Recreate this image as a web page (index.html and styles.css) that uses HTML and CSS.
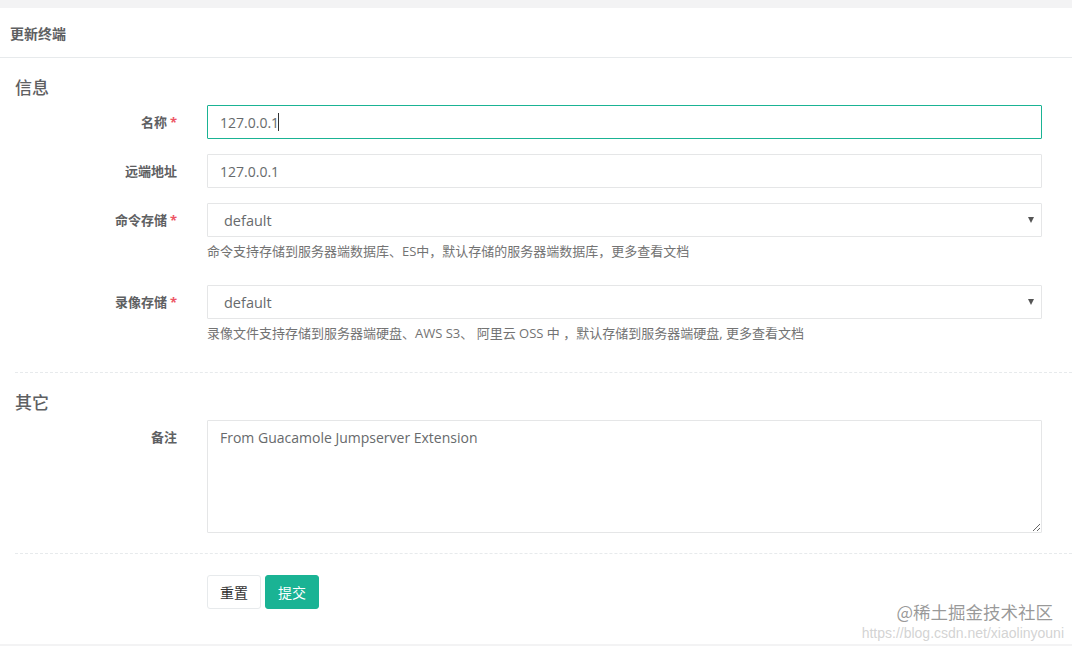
FILE: index.html
```html
<!DOCTYPE html>
<html lang="zh-CN">
<head>
<meta charset="utf-8">
<title>更新终端</title>
<link rel="stylesheet" href="styles.css">
</head>
<body>
<div class="page">
  <div class="panel">
    <div class="panel-head"><h5 class="panel-title">更新终端</h5></div>
    <form class="panel-body">
      <h3 class="section-title">信息</h3>

      <div class="form-row">
        <label class="form-label">名称 <span class="req">*</span></label>
        <div class="form-field">
          <div class="input-wrap">
            <input class="form-input is-focus" type="text" value="127.0.0.1">
            <span class="caret"></span>
          </div>
        </div>
      </div>

      <div class="form-row">
        <label class="form-label">远端地址</label>
        <div class="form-field">
          <input class="form-input" type="text" value="127.0.0.1">
        </div>
      </div>

      <div class="form-row">
        <label class="form-label">命令存储 <span class="req">*</span></label>
        <div class="form-field">
          <div class="select-wrap">
            <select class="form-select"><option>default</option></select>
          </div>
          <div class="help">命令支持存储到服务器端数据库、ES中，默认存储的服务器端数据库，更多查看文档</div>
        </div>
      </div>

      <div class="form-row">
        <label class="form-label">录像存储 <span class="req">*</span></label>
        <div class="form-field">
          <div class="select-wrap">
            <select class="form-select"><option>default</option></select>
          </div>
          <div class="help">录像文件支持存储到服务器端硬盘、AWS S3、 阿里云 OSS 中 ，默认存储到服务器端硬盘, 更多查看文档</div>
        </div>
      </div>

      <div class="hr-dashed"></div>

      <h3 class="section-title">其它</h3>

      <div class="form-row">
        <label class="form-label">备注</label>
        <div class="form-field">
          <textarea class="form-textarea">From Guacamole Jumpserver Extension</textarea>
        </div>
      </div>

      <div class="hr-dashed"></div>

      <div class="actions">
        <button type="button" class="btn btn-white">重置</button>
        <button type="button" class="btn btn-primary">提交</button>
      </div>
    </form>

    <div class="watermark">
      <div class="wm-main">@稀土掘金技术社区</div>
      <div class="wm-url">https://blog.csdn.net/xiaolinyouni</div>
    </div>
  </div>
</div>
</body>
</html>
```

FILE: styles.css
```css
* { box-sizing: border-box; }

html, body {
  margin: 0;
  padding: 0;
  background: #f3f3f4;
}

body {
  font-family: "Open Sans", "Noto Sans CJK SC", sans-serif;
  color: #676a6c;
  font-size: 13px;
}

.page {
  padding: 8px 0 2px;
}

.panel {
  position: relative;
  background: #ffffff;
  height: 636px;
  overflow: hidden;
}

.panel-head {
  height: 50px;
  border-bottom: 1px solid #e7eaec;
  display: flex;
  align-items: center;
  padding-left: 10px;
}

.panel-title {
  margin: 0;
  font-size: 14px;
  font-weight: 700;
  font-family: "Noto Sans CJK SC", sans-serif;
  color: #5e6062;
  line-height: 20px;
}

.panel-body {
  display: flex;
  flex-direction: column;
  padding-left: 15px;
  margin: 0;
}

.section-title {
  margin: 17px 0 6px;
  font-size: 17px;
  line-height: 24px;
  font-weight: 500;
  font-family: "Noto Sans CJK SC", sans-serif;
  color: #5e6062;
}

.form-row {
  display: grid;
  grid-template-columns: 162px 835px;
  column-gap: 30px;
  margin-bottom: 15px;
}

.form-label {
  text-align: right;
  padding-top: 7px;
  line-height: 20px;
  font-size: 13px;
  font-weight: 700;
  font-family: "Noto Sans CJK SC", sans-serif;
  color: #5e6062;
}

.req {
  color: #ed5565;
  font-family: "Open Sans", sans-serif;
}

.form-field {
  display: flex;
  flex-direction: column;
}

.input-wrap,
.select-wrap {
  position: relative;
}

.form-input,
.form-select,
.form-textarea {
  display: block;
  width: 100%;
  border: 1px solid #e5e6e7;
  border-radius: 1px;
  background: #ffffff;
  color: #676a6c;
  font-family: "Open Sans", "Noto Sans CJK SC", sans-serif;
  font-size: 14px;
  outline: none;
  margin: 0;
}

.form-input {
  height: 34px;
  padding: 6px 12px;
}

.form-input.is-focus {
  border-color: #1ab394;
}

.caret {
  position: absolute;
  left: 71px;
  top: 8px;
  width: 1px;
  height: 18px;
  background: #333333;
}

.form-select {
  height: 34px;
  padding: 6px 30px 6px 16px;
  font-size: 14.5px;
  -webkit-appearance: none;
  appearance: none;
}

.select-wrap::after {
  content: "";
  position: absolute;
  right: 8px;
  top: 14px;
  border-left: 3px solid transparent;
  border-right: 3px solid transparent;
  border-top: 6px solid #555555;
}

.help {
  margin: 5px 0 10px;
  line-height: 18px;
  font-size: 13px;
  color: #737373;
}

.form-textarea {
  height: 113px;
  padding: 6px 12px;
  line-height: 22px;
  resize: vertical;
}

.hr-dashed {
  height: 1px;
  border-top: 1px dashed #e7eaec;
  margin-top: 5px;
}

.actions {
  display: flex;
  gap: 4px;
  margin-top: 21px;
  padding-left: 192px;
}

.btn {
  height: 34px;
  width: 54px;
  border-radius: 3px;
  font-size: 14px;
  font-family: "Noto Sans CJK SC", sans-serif;
  cursor: pointer;
  padding: 0;
}

.btn-white {
  background: #ffffff;
  border: 1px solid #e7eaec;
  color: #333333;
}

.btn-primary {
  background: #1ab394;
  border: 1px solid #1ab394;
  color: #ffffff;
}

.watermark {
  position: absolute;
  right: 8px;
  bottom: 0;
  display: flex;
  flex-direction: column;
  align-items: flex-end;
  gap: 0;
  pointer-events: none;
}

.wm-main {
  font-family: "Noto Sans CJK SC", sans-serif;
  font-size: 17.5px;
  line-height: 26px;
  color: rgba(120, 120, 120, 0.75);
  margin-right: 11px;
}

.wm-url {
  font-family: "Liberation Sans", sans-serif;
  font-size: 14px;
  line-height: 17px;
  color: rgba(200, 200, 200, 0.8);
  margin-bottom: 2px;
}
```
